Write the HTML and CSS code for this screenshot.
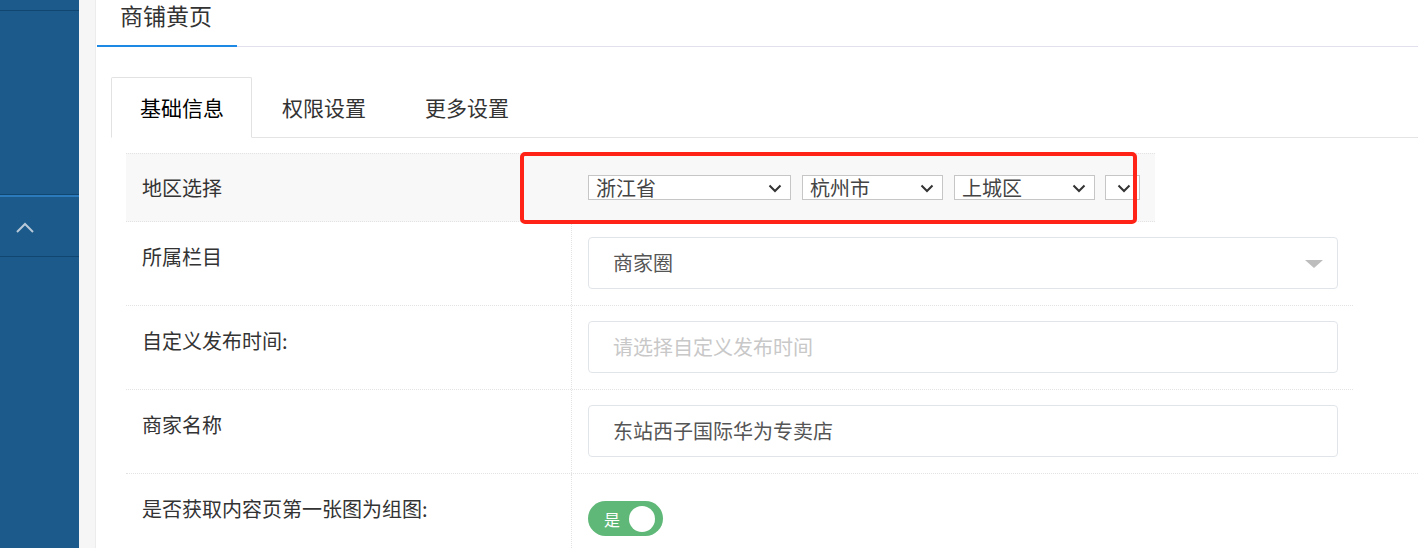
FILE: index.html
```html
<!DOCTYPE html>
<html>
<head>
<meta charset="utf-8">
<title>商铺黄页</title>
<link rel="stylesheet" href="styles.css">
</head>

<body>
    <div class="app">
        <!-- 左侧导航 -->
        <aside class="sidebar">
            <div class="nav-top"></div>
            <div class="nav-block"></div>
            <div class="nav-toggle">
                <svg width="20" height="14" viewBox="0 0 20 14"><path d="M2 12 L10 4 L18 12" fill="none" stroke="#b8c8d8" stroke-width="2"/></svg>
            </div>
        </aside>
        <div class="gutter"></div>

        <main class="main">
            <div class="page-title">
                <h2>商铺黄页</h2>
            </div>

            <div class="tabs">
                <div class="tab active">基础信息</div>
                <div class="tab">权限设置</div>
                <div class="tab">更多设置</div>
            </div>

            <div class="form">
                <div class="row region">
                    <div class="label">地区选择</div>
                    <div class="value">
                        <div class="pick w-prov">浙江省<svg class="chev" width="14" height="9" viewBox="0 0 14 9"><path d="M1.5 1.5 L7 7 L12.5 1.5" fill="none" stroke="#333" stroke-width="2"/></svg></div>
                        <div class="pick w-city">杭州市<svg class="chev" width="14" height="9" viewBox="0 0 14 9"><path d="M1.5 1.5 L7 7 L12.5 1.5" fill="none" stroke="#333" stroke-width="2"/></svg></div>
                        <div class="pick w-city">上城区<svg class="chev" width="14" height="9" viewBox="0 0 14 9"><path d="M1.5 1.5 L7 7 L12.5 1.5" fill="none" stroke="#333" stroke-width="2"/></svg></div>
                        <div class="pick w-none"><svg class="chev" width="14" height="9" viewBox="0 0 14 9"><path d="M1.5 1.5 L7 7 L12.5 1.5" fill="none" stroke="#333" stroke-width="2"/></svg></div>
                    </div>
                </div>

                <div class="row">
                    <div class="label">所属栏目</div>
                    <div class="value">
                        <div class="input select">商家圈<span class="caret"></span></div>
                    </div>
                </div>

                <div class="row">
                    <div class="label">自定义发布时间:</div>
                    <div class="value">
                        <div class="input placeholder">请选择自定义发布时间</div>
                    </div>
                </div>

                <div class="row wide">
                    <div class="label">商家名称</div>
                    <div class="value">
                        <div class="input">东站西子国际华为专卖店</div>
                    </div>
                </div>

                <div class="row wide">
                    <div class="label">是否获取内容页第一张图为组图:</div>
                    <div class="value">
                        <div class="switch"><span>是</span><i></i></div>
                    </div>
                </div>
            </div>
        </main>
    </div>

    <!-- 标注框 -->
    <div class="mark"></div>
</body>

</html>
```

FILE: styles.css
```css
* {
    margin: 0;
    padding: 0;
    box-sizing: border-box;
}

body {
    width: 1418px;
    height: 548px;
    overflow: hidden;
    background: #fff;
    font-family: "Noto Sans CJK SC", "Liberation Sans", sans-serif;
    color: #333;
}

.app {
    display: flex;
    height: 548px;
}

/* sidebar */
.sidebar {
    width: 79px;
    background-color: #1b5a8a;
    flex-shrink: 0;
}

.nav-top {
    height: 11px;
    border-bottom: 1px solid #114670;
}

.nav-block {
    height: 184px;
    border-bottom: 1px solid #114670;
}

.nav-toggle {
    height: 62px;
    border-top: 2px solid #2b7abb;
    border-bottom: 1px solid #114670;
    display: flex;
    align-items: center;
    padding-left: 15px;
}

.gutter {
    width: 17px;
    background-color: #f6f6f6;
    border-right: 1px solid #ececec;
    flex-shrink: 0;
}

.main {
    flex: 1;
}

/* title */
.page-title {
    height: 47px;
    border-bottom: 1px solid #e2dfee;
    margin-left: 1px;
}

h2 {
    display: inline-block;
    width: 140px;
    height: 47px;
    padding-left: 23px;
    font-size: 23px;
    font-weight: normal;
    line-height: 30px;
    color: #333;
    border-bottom: 2px solid #1e88e5;
}

/* tabs */
.tabs {
    display: flex;
    margin: 30px 0 0 15px;
    border-bottom: 1px solid #e4e4e4;
    height: 61px;
}

.tab {
    padding: 0 28px 0 29px;
    height: 60px;
    line-height: 58px;
    font-size: 21px;
    color: #333;
    border: 1px solid transparent;
}

.tab.active {
    padding: 0 27px 0 28px;
    color: #000;
    background: #fff;
    border-color: #e2e2e2;
    border-bottom-color: #fff;
    border-radius: 2px 2px 0 0;
    height: 61px;
}

/* form */
.form {
    margin: 15px 0 0 30px;
}

.row {
    display: flex;
    width: 1227px;
    border-bottom: 1px dotted #e3e3e3;
}

.row.wide {
    width: 1292px;
}

.label {
    width: 446px;
    padding: 16px 0 0 16px;
    font-size: 20px;
    line-height: 38px;
    color: #333;
    border-right: 1px dotted #e3e3e3;
}

.value {
    padding: 15px 15px 16px 16px;
}

.row.region {
    width: 1029px;
    height: 69px;
    background-color: #f8f8f8;
    border-top: 1px dotted #e3e3e3;
    align-items: center;
}

.row.region .label {
    padding-top: 0;
    border-right: none;
}

.row.region .value {
    display: flex;
    padding: 0 0 0 16px;
    gap: 11px;
}

.pick {
    position: relative;
    height: 25px;
    padding-left: 7px;
    font-size: 20px;
    line-height: 23px;
    color: #444;
    background: #fff;
    border: 1px solid #c6c6c6;
}

.w-prov {
    width: 203px;
}

.w-city {
    width: 141px;
}

.w-none {
    width: 35px;
    margin-left: -1px;
}

.chev {
    position: absolute;
    right: 8px;
    top: 8px;
}

.input {
    position: relative;
    width: 750px;
    height: 52px;
    padding-left: 24px;
    font-size: 20px;
    line-height: 50px;
    color: #555;
    border: 1px solid #e1e5ea;
    border-radius: 4px;
}

.input.placeholder {
    color: #c8c8c8;
}

.caret {
    position: absolute;
    right: 14px;
    top: 22px;
    border-left: 9px solid transparent;
    border-right: 9px solid transparent;
    border-top: 8px solid #bdbdbd;
}

.switch {
    display: flex;
    align-items: center;
    justify-content: space-between;
    width: 75px;
    height: 35px;
    margin-top: 12px;
    padding: 0 8px 0 16px;
    border-radius: 18px;
    background-color: #5fb878;
    color: #fff;
    font-size: 16px;
}

.switch i {
    width: 26px;
    height: 26px;
    border-radius: 50%;
    background: #fff;
}

/* annotation */
.mark {
    position: absolute;
    left: 520px;
    top: 152px;
    width: 617px;
    height: 72px;
    border: 4px solid #ff2216;
    border-radius: 5px;
}
```
